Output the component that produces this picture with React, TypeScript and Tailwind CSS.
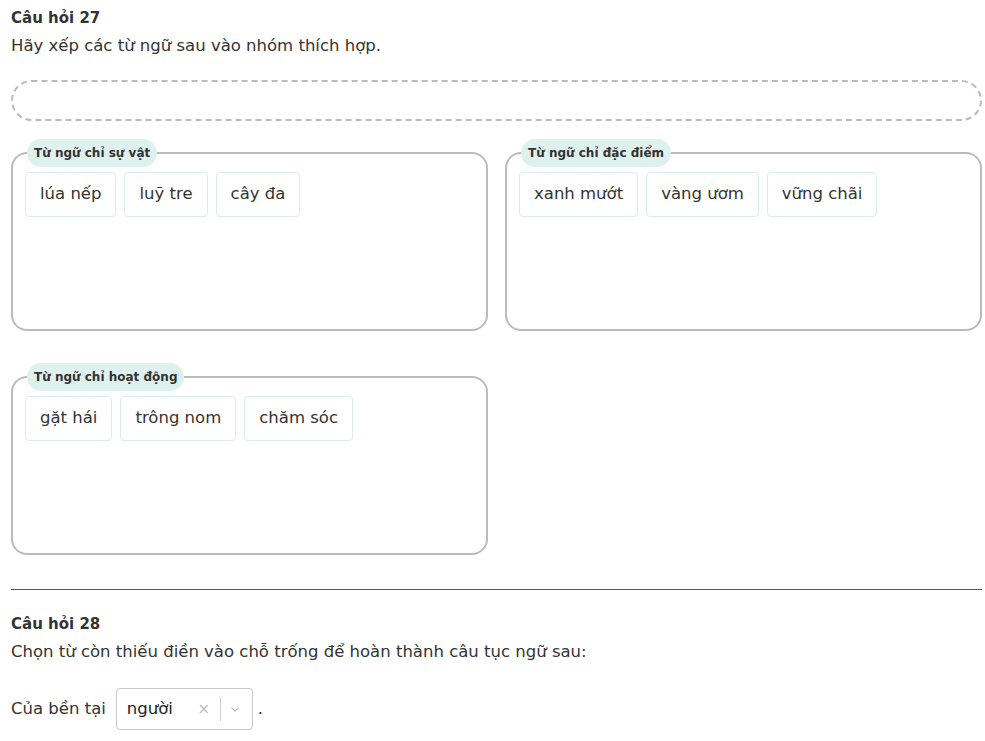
import React from "react";

const font = { fontFamily: '"DejaVu Sans", Verdana, sans-serif' };

function Chip({ text }: { text: string }) {
  return (
    <div className="h-[45px] px-[14px] flex items-center border border-[#d9eeec] rounded-[4px] text-[16.5px] text-[#333]">
      {text}
    </div>
  );
}

function Group({ label, items }: { label: string; items: string[] }) {
  return (
    <div className="relative h-[179px] border-2 border-[#b9bbbf] rounded-[16px] pt-[18px] px-[12px]">
      <div className="absolute left-[14px] top-[-15px] h-[28px] px-[7px] flex items-center rounded-full bg-[#dff1ef] text-[12px] font-semibold text-[#333]">
        {label}
      </div>
      <div className="flex gap-[8px]">
        {items.map((t) => (
          <Chip key={t} text={t} />
        ))}
      </div>
    </div>
  );
}

export default function App() {
  return (
    <div className="bg-white w-[985px] h-[741px] overflow-hidden text-[#333]" style={font}>
      <div className="w-[971px] ml-[11px] pt-[8px]">
        <div className="text-[15px] font-bold leading-[20px]">Câu hỏi 27</div>
        <div className="text-[16.5px] leading-[20px] mt-[8px]">Hãy xếp các từ ngữ sau vào nhóm thích hợp.</div>
        <div className="mt-[24px] h-[41px] border-2 border-dashed border-[#b9bbbf] rounded-full"></div>
        <div className="grid grid-cols-2 gap-x-[17px] gap-y-[45px] mt-[31px]">
          <Group label="Từ ngữ chỉ sự vật" items={["lúa nếp", "luỹ tre", "cây đa"]} />
          <Group label="Từ ngữ chỉ đặc điểm" items={["xanh mướt", "vàng ươm", "vững chãi"]} />
          <Group label="Từ ngữ chỉ hoạt động" items={["gặt hái", "trông nom", "chăm sóc"]} />
        </div>
        <div className="mt-[34px] h-px bg-[#555]"></div>
        <div className="text-[15px] font-bold leading-[20px] mt-[24px]">Câu hỏi 28</div>
        <div className="text-[16.5px] leading-[20px] mt-[8px]">Chọn từ còn thiếu điền vào chỗ trống để hoàn thành câu tục ngữ sau:</div>
        <div className="flex items-center mt-[26px] text-[16.5px]">
          <span>Của bền tại</span>
          <div className="ml-[10px] h-[42px] w-[137px] border border-[#c8c8c8] rounded-[4px] flex items-center pl-[10px]">
            <span className="text-[16.5px] text-[#222] flex-1">người</span>
            <span className="text-[#bbb] text-[15px] w-[18px] text-center">×</span>
            <span className="w-px h-[24px] bg-[#ccc] mx-[7px]"></span>
            <svg width="14" height="14" viewBox="0 0 20 20" className="mr-[10px]">
              <path d="M5 8l5 5 5-5" fill="none" stroke="#bbb" strokeWidth="1.6" />
            </svg>
          </div>
          <span className="ml-[5px]">.</span>
        </div>
      </div>
    </div>
  );
}
